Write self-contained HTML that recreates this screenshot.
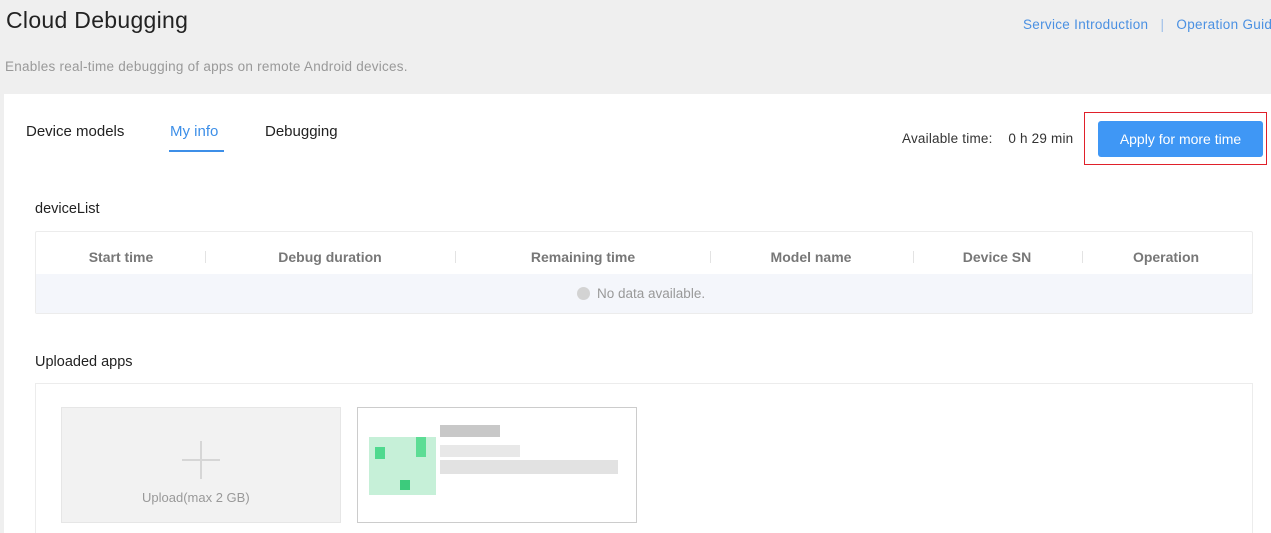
<!DOCTYPE html>
<html><head><meta charset="utf-8"><style>
*{margin:0;padding:0;box-sizing:border-box}
html,body{width:1271px;height:533px;overflow:hidden}
body{background:#efefef;font-family:"Liberation Sans",sans-serif;position:relative;color:#222}
.a{position:absolute;white-space:nowrap}
.panel{position:absolute;left:4px;top:94px;width:1267px;height:439px;background:#fff}
.th{position:absolute;top:249px;font-size:14px;color:#777;font-weight:bold;transform:translateX(-50%)}
.sep{position:absolute;top:251px;width:1px;height:12px;background:#e3e3e3}
</style></head><body>
<div class="a" style="left:6px;top:7px;font-size:23px;color:#222;letter-spacing:0.3px">Cloud Debugging</div>
<div class="a" style="left:5px;top:59px;font-size:13.5px;color:#999;letter-spacing:0.25px">Enables real-time debugging of apps on remote Android devices.</div>
<div class="a" style="left:1023px;top:17px;font-size:13.5px;color:#4a90e2;letter-spacing:0.3px">Service Introduction &nbsp;&nbsp;<span style="color:#9bbde8">|</span>&nbsp;&nbsp; Operation Guide</div>
<div class="panel"></div>
<div class="a" style="left:26px;top:123px;font-size:15px;color:#222">Device models</div>
<div class="a" style="left:170px;top:123px;font-size:15px;color:#3d8fe8">My info</div>
<div style="position:absolute;left:169px;top:150px;width:55px;height:2px;background:#3d8fe8"></div>
<div class="a" style="left:265px;top:123px;font-size:15px;color:#222">Debugging</div>
<div class="a" style="left:902px;top:131px;font-size:13.5px;color:#333;letter-spacing:0.2px">Available time: &nbsp;&nbsp; 0 h 29 min</div>
<div style="position:absolute;left:1084px;top:112px;width:183px;height:53px;border:1.5px solid #e0202a"></div>
<div style="position:absolute;left:1098px;top:121px;width:165px;height:36px;background:#3f97f5;border-radius:3px;color:#fff;font-size:14px;text-align:center;line-height:36px">Apply for more time</div>
<div class="a" style="left:35px;top:201px;font-size:14.5px;color:#222">deviceList</div>
<div style="position:absolute;left:35px;top:231px;width:1218px;height:83px;border:1px solid #ececec;border-radius:2px"></div>
<div style="position:absolute;left:36px;top:274px;width:1216px;height:39px;background:#f4f6fb"></div>
<div class="th" style="left:121px">Start time</div>
<div class="th" style="left:330px">Debug duration</div>
<div class="th" style="left:583px">Remaining time</div>
<div class="th" style="left:811px">Model name</div>
<div class="th" style="left:997px">Device SN</div>
<div class="th" style="left:1166px">Operation</div>
<div class="sep" style="left:205px"></div><div class="sep" style="left:455px"></div><div class="sep" style="left:710px"></div><div class="sep" style="left:913px"></div><div class="sep" style="left:1082px"></div>
<div style="position:absolute;left:577px;top:287px;width:13px;height:13px;border-radius:50%;background:#d3d3d3"></div>
<div class="a" style="left:597px;top:286px;font-size:13.5px;color:#999">No data available.</div>
<div class="a" style="left:35px;top:354px;font-size:14.5px;color:#222">Uploaded apps</div>
<div style="position:absolute;left:35px;top:383px;width:1218px;height:160px;border:1px solid #ececec"></div>
<div style="position:absolute;left:61px;top:407px;width:280px;height:116px;background:#f2f2f2;border:1px solid #e6e6e6"></div>
<div style="position:absolute;left:182px;top:459px;width:38px;height:2px;background:#d6d6d6"></div>
<div style="position:absolute;left:200px;top:441px;width:2px;height:38px;background:#d6d6d6"></div>
<div class="a" style="left:142px;top:490px;font-size:13px;color:#999">Upload(max 2 GB)</div>
<div style="position:absolute;left:357px;top:407px;width:280px;height:116px;border:1px solid #ccc;background:#fff"></div>
<div style="position:absolute;left:369px;top:437px;width:67px;height:58px;background:#c6f0d8"></div>
<div style="position:absolute;left:375px;top:447px;width:10px;height:12px;background:#4fd98e"></div>
<div style="position:absolute;left:400px;top:480px;width:10px;height:10px;background:#3ccb7c"></div>
<div style="position:absolute;left:416px;top:437px;width:10px;height:20px;background:#5ddd95"></div>
<div style="position:absolute;left:440px;top:425px;width:60px;height:12px;background:#c8c8c8"></div>
<div style="position:absolute;left:440px;top:445px;width:80px;height:12px;background:#e8e8e8"></div>
<div style="position:absolute;left:440px;top:460px;width:178px;height:14px;background:#e2e2e2"></div>
</body></html>
